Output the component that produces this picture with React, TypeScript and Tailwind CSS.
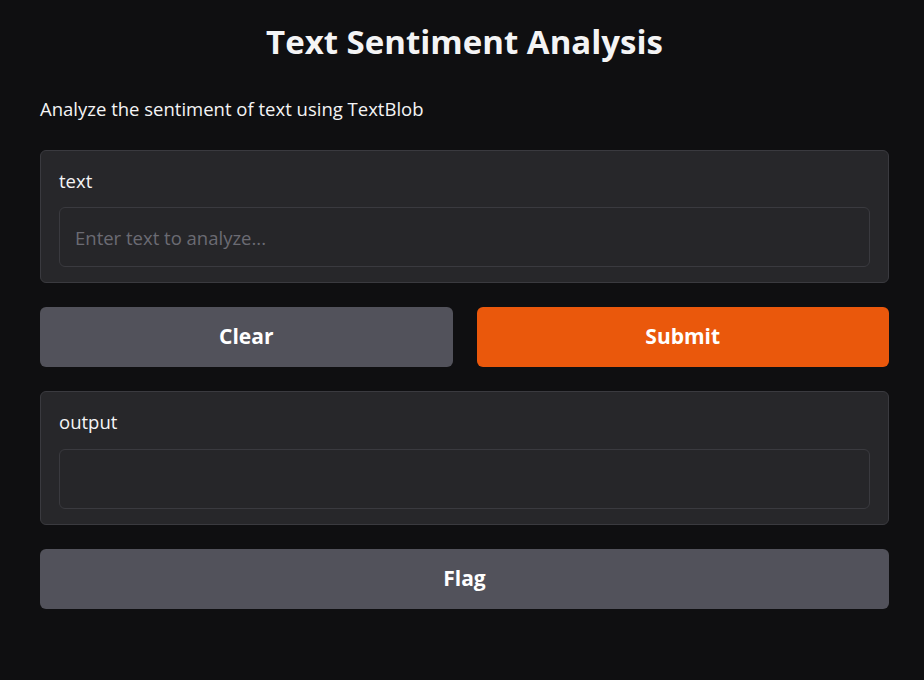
export default function App() {
  return (
    <div
      className="min-h-[680px] w-full bg-[#0f0f11] text-[#f4f4f5]"
      style={{ fontFamily: "'Open Sans', 'Noto Sans', sans-serif" }}
    >
      <div className="ml-[40px] flex w-[849px] flex-col pt-[20px]">
        <h1 className="text-center text-[33px] font-bold leading-[44px]">Text Sentiment Analysis</h1>
        <p className="mt-[32px] text-[18.5px] leading-[26px]">Analyze the sentiment of text using TextBlob</p>

        <div className="mt-[28px] flex flex-col rounded-[6px] border border-[#3a3a3f] bg-[#27272a] px-[18px] pb-[15px] pt-[18px]">
          <label className="text-[18.5px] leading-[24px]">text</label>
          <input
            className="mt-[14px] h-[60px] rounded-[6px] border border-[#3a3a3f] bg-[#262629] px-[15px] text-[18.5px] text-[#f4f4f5] outline-none placeholder:text-[#6b6b73]"
            placeholder="Enter text to analyze..."
          />
        </div>

        <div className="mt-[24px] grid grid-cols-2 gap-[24px]">
          <button className="h-[60px] rounded-[6px] bg-[#52525b] text-[21px] font-bold text-white">Clear</button>
          <button className="h-[60px] rounded-[6px] bg-[#ea580c] text-[21px] font-bold text-white">Submit</button>
        </div>

        <div className="mt-[24px] flex flex-col rounded-[6px] border border-[#3a3a3f] bg-[#27272a] px-[18px] pb-[15px] pt-[18px]">
          <label className="text-[18.5px] leading-[24px]">output</label>
          <div className="mt-[15px] h-[60px] rounded-[6px] border border-[#3a3a3f] bg-[#262629]" />
        </div>

        <button className="mt-[24px] h-[60px] rounded-[6px] bg-[#52525b] text-[21px] font-bold text-white">Flag</button>
      </div>
    </div>
  );
}
